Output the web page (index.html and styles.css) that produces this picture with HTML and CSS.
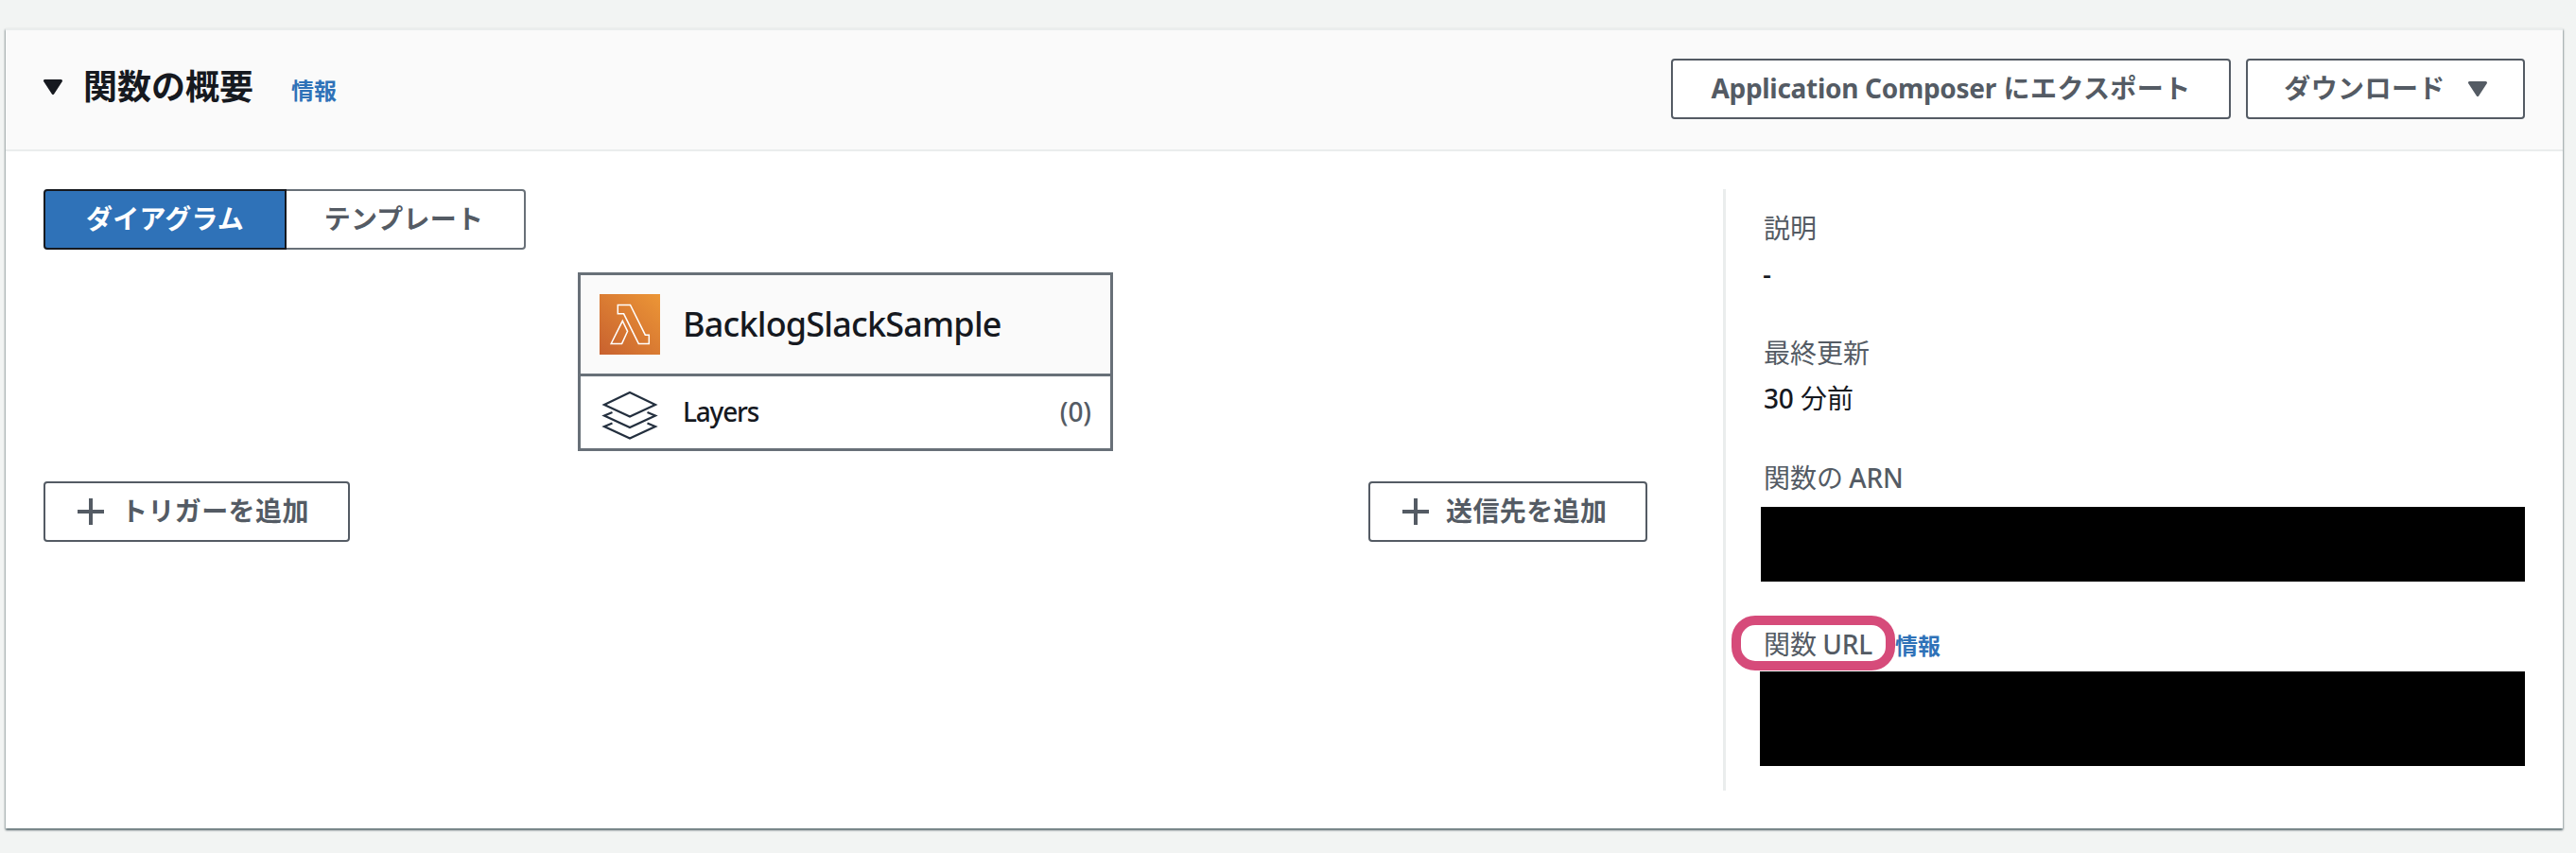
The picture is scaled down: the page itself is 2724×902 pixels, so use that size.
FILE: index.html
```html
<!DOCTYPE html>
<html lang="ja">
<head>
<meta charset="utf-8">
<title>関数の概要</title>
<link rel="stylesheet" href="styles.css">
</head>
<body>
<section class="panel">
  <header class="panel-header">
    <svg class="caret" viewBox="0 0 20 16"><path d="M1.500 1.500H18.500L10 14.500Z"/></svg>
    <h2 class="title">関数の概要</h2>
    <a class="info">情報</a>
    <div class="actions">
      <button class="btn btn-export"><span class="latin-bold">Application Composer</span> にエクスポート</button>
      <button class="btn btn-download">ダウンロード<svg class="caret" viewBox="0 0 20 16"><path d="M1.500 1.500H18.500L10 14.500Z"/></svg></button>
    </div>
  </header>
  <div class="panel-body">
    <div class="designer">
      <div class="tabs">
        <button class="tab tab-active">ダイアグラム</button>
        <button class="tab">テンプレート</button>
      </div>
      <div class="card">
        <div class="card-head">
          <svg class="lambda" viewBox="0 0 64 64">
            <defs><linearGradient id="orange" x1="0" y1="1" x2="1" y2="0"><stop offset="0" stop-color="#c8612f"/><stop offset="1" stop-color="#ec9636"/></linearGradient></defs>
            <rect width="64" height="64" fill="url(#orange)" stroke="none"/>
            <path d="M19.3 11.5H32.5L48.3 43.2H52.3V52.4H41.3L25.6 20.8H19.3ZM24.3 28.3L29.6 39.3L23.6 52.4H12.2Z"/>
          </svg>
          <span class="fn-name">BacklogSlackSample</span>
        </div>
        <div class="card-row">
          <svg class="layers" viewBox="0 0 64 64">
            <path d="M32 6L59 19L32 31.500L5 19Z"/>
            <path d="M13.500 27L5 30.500L32 43L59 30.500L50.500 27"/>
            <path d="M13.500 38.500L5 42L32 54.500L59 42L50.500 38.500"/>
          </svg>
          <span class="layers-name">Layers</span>
          <span class="count">(0)</span>
        </div>
      </div>
      <div class="adders">
        <button class="btn btn-trigger"><svg class="plus" viewBox="0 0 28 28"><path d="M0 14H28M14 0V28"/></svg>トリガーを追加</button>
        <button class="btn btn-dest"><svg class="plus" viewBox="0 0 28 28"><path d="M0 14H28M14 0V28"/></svg>送信先を追加</button>
      </div>
    </div>
    <dl class="details">
      <dt>説明</dt>
      <dd><span class="latin">-</span></dd>
      <dt>最終更新</dt>
      <dd><span class="latin num">30</span> 分前</dd>
      <dt>関数の <span class="latin">ARN</span></dt>
      <dd class="mask mask-arn"></dd>
      <dt class="url-row"><span class="url-label">関数 <span class="latin">URL</span><i class="ring"></i></span><a class="info info-url">情報</a></dt>
      <dd class="mask mask-url"></dd>
    </dl>
  </div>
</section>
</body>
</html>
```
FILE: styles.css
```css
* { box-sizing: border-box; }
body {
  margin: 0;
  height: 902px;
  padding: 30px 14px 26px 6px;
  background: #f2f4f3;
  color: #16191f;
  font: 28px/48px "Noto Sans", "Noto Sans CJK JP", sans-serif;
  overflow: hidden;
}
svg { display: block; flex: none; }
.panel {
  height: 846px;
  background: #fff;
  border-top: 2px solid #eaeded;
  box-shadow: 0 2px 2px 0 rgba(0, 28, 36, .5), 1px 1px 2px 0 rgba(0, 28, 36, .2), -1px 1px 2px 0 rgba(0, 28, 36, .2);
}
.panel-header {
  display: flex;
  align-items: center;
  height: 128px;
  padding: 0 40px;
  background: #fafafa;
  border-bottom: 2px solid #eaeded;
}
.caret {
  width: 20px;
  height: 16px;
  fill: currentColor;
  stroke: currentColor;
  stroke-width: 3;
  stroke-linejoin: round;
}
.panel-header > .caret { margin-bottom: 6px; }
.title { margin: 0 0 6px 22px; font-size: 36px; font-weight: 700; }
.info { color: #2f72b8; font-size: 24px; font-weight: 700; }
.panel-header .info { margin: 2px 0 0 40px; }
.info-url { margin-top: 2px; }
.actions { display: flex; gap: 16px; margin: 0 0 2px auto; }
.btn, .tab {
  display: flex;
  align-items: center;
  justify-content: center;
  height: 64px;
  padding: 0 0 2px;
  border: 2px solid #545b64;
  border-radius: 4px;
  background: #fff;
  color: #545b64;
  font: inherit;
  font-weight: 700;
  white-space: pre;
}
.btn-export { width: 592px; letter-spacing: .4px; }
.latin-bold { letter-spacing: -.3px; }
.btn-download { width: 295px; gap: 24px; letter-spacing: .4px; }
.btn-download .caret { margin-top: 2px; }
.panel-body { display: flex; padding: 40px; height: 716px; }
.designer { width: 1696px; }
.tabs { display: flex; }
.tab { width: 253px; padding: 0 3px 3px 0; border-color: #687078; border-left: 0; border-radius: 0 4px 4px 0; letter-spacing: .2px; }
.tab-active { width: 257px; padding: 0 0 3px; border: 2px solid #16191f; border-radius: 4px 0 0 4px; background: #2f72b8; color: #fff; }
.card { width: 566px; height: 189px; margin: 24px 0 0 565px; border: 3px solid #687078; }
.card-head {
  display: flex;
  align-items: center;
  height: 107px;
  padding: 0 20px;
  gap: 24px;
  background: #fafafa;
  border-bottom: 3px solid #687078;
}
.lambda, .layers { width: 64px; height: 64px; fill: none; stroke: #fff; stroke-width: 1.5; }
.layers { margin-top: 10px; stroke: #232f3e; stroke-width: 2.2; }
.fn-name, .layers-name, .count, .latin { font-weight: 500; }
.fn-name { font-size: 36px; letter-spacing: -.8px; }
.card-row { display: flex; align-items: center; height: 76px; padding: 0 20px; gap: 24px; }
.layers-name { margin-bottom: 2px; letter-spacing: -1.2px; }
.count { margin: 0 0 2px auto; color: #545b64; letter-spacing: -.1px; }
.latin { margin-left: -1px; letter-spacing: -.2px; }
.num { margin-left: 0; }
.adders { display: flex; justify-content: space-between; margin-top: 32px; }
.plus { width: 28px; height: 28px; margin-top: 2px; stroke: currentColor; stroke-width: 4; }
.btn-trigger, .btn-dest { justify-content: flex-start; gap: 18px; padding-left: 34px; letter-spacing: .4px; }
.btn-trigger { width: 324px; }
.btn-dest { width: 295px; }
.details {
  width: 848px;
  margin: 0 0 0 80px;
  padding: 17px 0 0 40px;
  border-left: 3px solid #eaeded;
}
dt { height: 48px; color: #545b64; }
dd { height: 48px; margin: 0 0 36px; }
.details .mask { background: #000; }
.details .mask-arn { height: 79px; margin: 7px 0 42px -3px; }
.details .mask-url { height: 100px; margin: 5px 0 0 -4px; }
.url-row { display: flex; }
.url-label { position: relative; width: 139px; white-space: nowrap; }
.ring { position: absolute; left: -34px; top: -6px; width: 173px; height: 58px; border: 10px solid #d64b7a; border-radius: 25px; }
```
